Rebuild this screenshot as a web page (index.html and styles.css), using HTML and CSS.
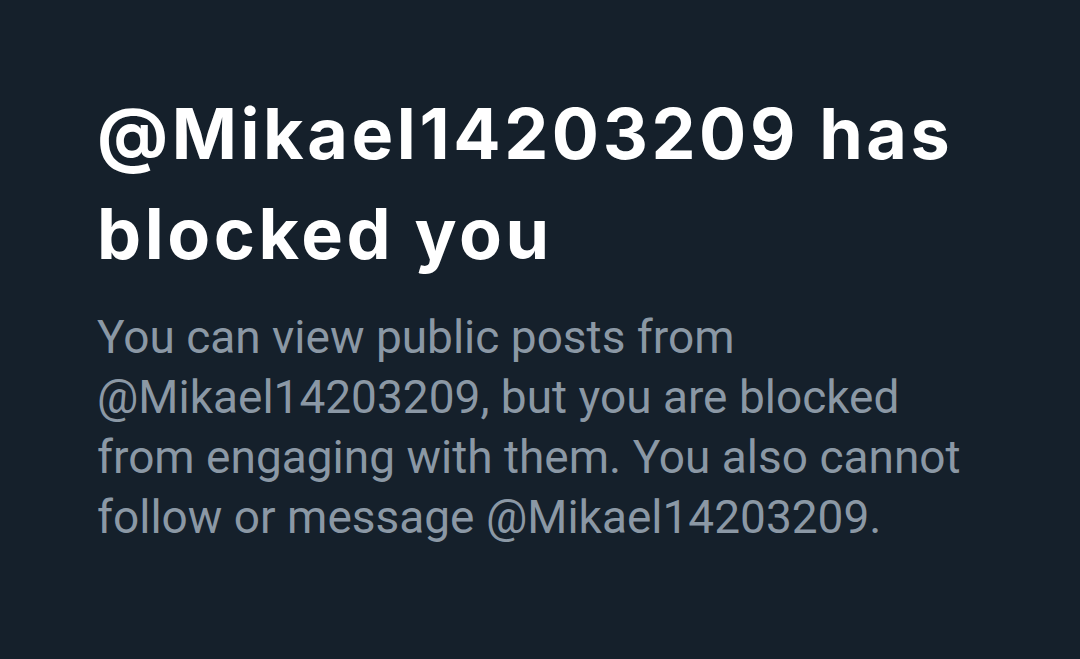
FILE: index.html
```html
<!DOCTYPE html>
<html lang="en">
<head>
<meta charset="utf-8">
<title>Blocked</title>
<link rel="stylesheet" href="styles.css">
</head>
<body>
<main class="page">
  <section class="notice">
    <h1 class="title">@Mikael14203209 has blocked you</h1>
    <p class="desc">You can view public posts from @Mikael14203209, but you are blocked from engaging with them. You also cannot follow or message @Mikael14203209.</p>
  </section>
</main>
</body>
</html>
```

FILE: styles.css
```css
html, body {
  margin: 0;
  padding: 0;
  background: #15202b;
}
.page {
  width: 1080px;
  height: 659px;
  box-sizing: border-box;
  padding: 84px 0 0 97px;
}
.notice {
  width: 880px;
}
.title {
  margin: 0;
  font-family: Inter, "Liberation Sans", Arial, sans-serif;
  font-weight: 700;
  font-size: 70px;
  letter-spacing: 3.6px;
  line-height: 100px;
  color: #ffffff;
}
.desc {
  margin: 23px 0 0 0;
  font-family: Roboto, "Liberation Sans", sans-serif;
  font-weight: 400;
  font-size: 46px;
  line-height: 60px;
  color: #8b98a5;
}
```
